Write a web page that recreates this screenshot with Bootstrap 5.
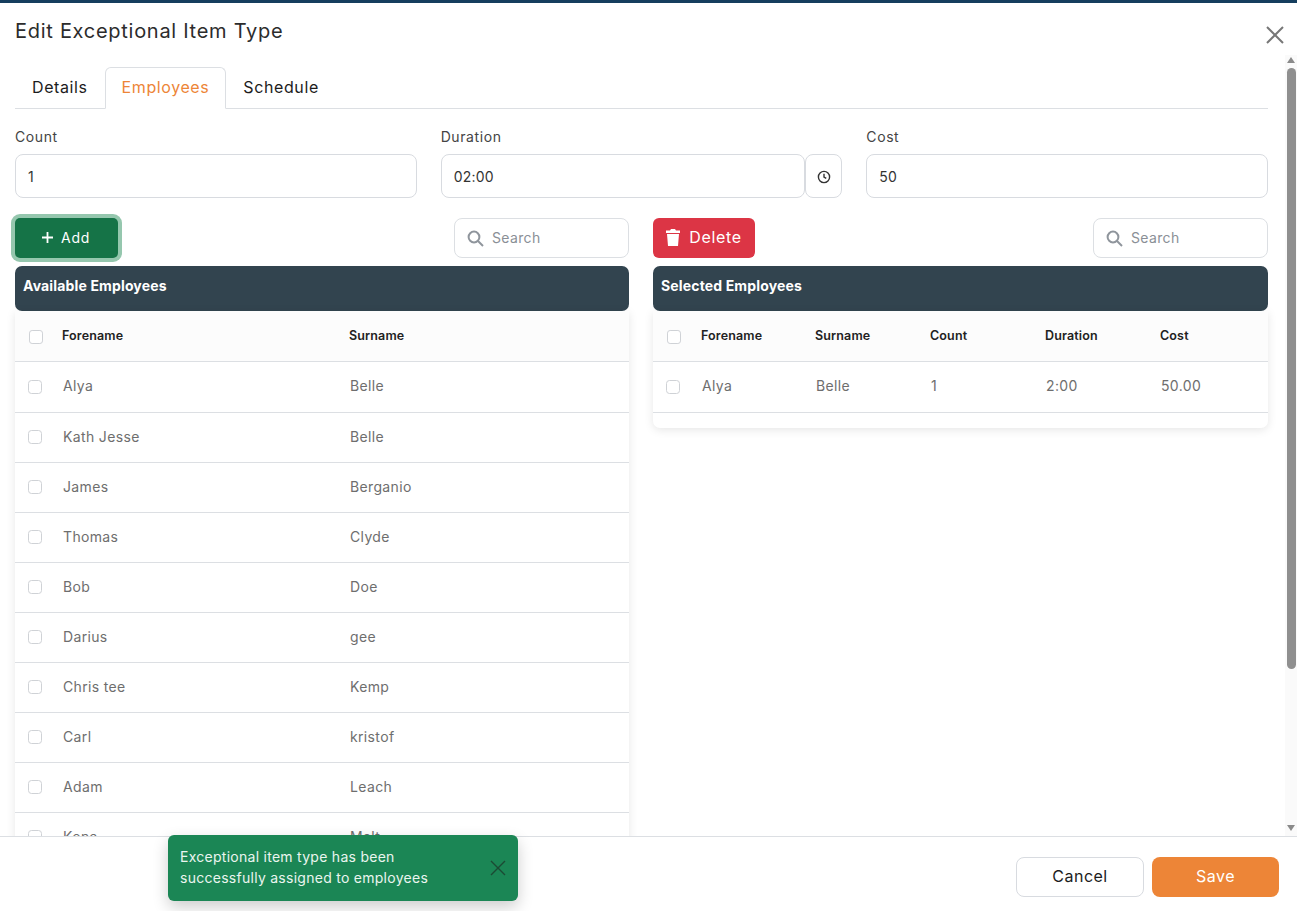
<!DOCTYPE html>
<html lang="en">
<head>
    <meta charset="UTF-8">
    <title>Edit Exceptional Item Type</title>
    <link href="https://cdn.jsdelivr.net/npm/bootstrap@5.3.0/dist/css/bootstrap.min.css" rel="stylesheet">
    <style>
        html, body { height: 100%; overflow: hidden; }
        body { font-family: Inter, "Open Sans", sans-serif; font-size: 14px; letter-spacing: .35px; color: #333; background: #fff; }

        .shell { height: 100vh; border-top: 3px solid #153e5e; position: relative; }
        .shell-head { height: 52px; padding: 0 15px; }
        .shell-title { font-size: 20px; font-weight: 400; line-height: 56px; margin: 0; color: #2c2c2c; letter-spacing: .72px; }
        .close-x { margin: 22px 12px 0 0; width: 20px; height: 20px; color: #777; }

        .scroll-area { min-height: 0; }
        .scroll-inner { padding: 12px 17px 0 15px; overflow: hidden; min-width: 0; }

        .rail { width: 12px; background: #fafafa; }
        .rail-up, .rail-down { width: 0; height: 0; border-left: 4px solid transparent; border-right: 4px solid transparent; margin: 2px auto; }
        .rail-up { border-bottom: 6px solid #8a8a8a; }
        .rail-down { border-top: 6px solid #8a8a8a; margin-top: auto; margin-bottom: 5px; }
        .rail-thumb { width: 9px; height: 601px; background: #8f8f8f; border-radius: 5px; margin: 3px 0 0 2px; }

        .tabs-row { border-bottom-color: #dcdfe3; margin-bottom: 19px; }
        .tabs-row .nav-link { font-size: 16px; padding: 0 16px; height: 42px; line-height: 39px; color: #1c1c1c; border-radius: 6px 6px 0 0; letter-spacing: .6px; }
        .tabs-row .nav-link.active { color: #ed8537; border-color: #dcdfe3 #dcdfe3 #fff; }

        .fld-row { margin-bottom: 20px; }
        .fld-label { font-size: 14px; margin-bottom: 9px; line-height: 17px; color: #444; display: block; letter-spacing: .6px; }
        .fld { height: 44px; border-color: #d8dbe0; border-radius: 8px; font-size: 14px; padding: 0 12px; color: #333; letter-spacing: .2px; }
        .clock-btn { width: 37px; height: 44px; padding: 0 0 2px; border: 1px solid #d8dbe0; border-radius: 8px; background: #fff; }

        .panes { display: grid; grid-template-columns: 614px 615px; gap: 24px; }
        .tool-row { height: 40px; margin-bottom: 8px; }
        .btn-add { width: 103px; height: 40px; background: #157347; color: #fff; border: 0; border-radius: 5px; box-shadow: 0 0 0 4px #95c7ae; font-size: 14px; padding: 0 2px 2px 0; letter-spacing: .7px; gap: 7px; }
        .btn-del { width: 102px; height: 40px; background: #dc3545; color: #fff; border: 0; border-radius: 6px; font-size: 16px; padding: 0 0 2px; letter-spacing: .7px; gap: 9px; }
        .btn-add svg, .btn-del svg { margin-bottom: -1px; }
        .search-box { width: 175px; height: 40px; border: 1px solid #dcdfe3; border-radius: 8px; padding: 0 0 2px 12px; color: #8a8f96; font-size: 14px; }
        .search-box svg { margin-bottom: -2px; }

        .panel-head { height: 45px; background: #32444f; color: #fff; border-radius: 7px; font-weight: 700; font-size: 14px; line-height: 40px; padding-left: 8px; letter-spacing: .15px; }
        .panel-body { background: #fff; box-shadow: 0 2px 10px rgba(0,0,0,.1); border-radius: 0 0 7px 7px; }

        .emp-table { table-layout: fixed; margin: 0; font-size: 14px; }
        .emp-table th { background: #fcfcfc; font-size: 12.5px; font-weight: 600; color: #222; height: 50px; padding: 2px 0 0; vertical-align: middle; border-bottom: 1px solid #dcdfe3; letter-spacing: .15px; }
        .emp-table td { height: 50px; padding: 0 0 2px 1px; vertical-align: middle; color: #6e6e6e; border-bottom: 1px solid #dcdfe3; }
        .emp-table tbody tr:first-child td { height: 51px; }
        .tick { width: 14px; height: 14px; margin: 0; border-color: #cfd2d6; border-radius: 3px; display: block; }
        th .tick { margin-left: 14px; }
        td .tick { margin-left: 12px; margin-bottom: -2px; }
        .sel-foot { height: 15px; }

        .shell-foot { height: 75px; border-top: 1px solid #dcdfe3; padding: 20px 18px 0 0; }
        .foot-btn { width: 128px; height: 40px; border-radius: 8px; font-size: 16px; padding: 0 0 2px; letter-spacing: .5px; }
        .btn-cancel { border: 1px solid #d8dbe0; background: #fff; color: #1c1c1c; }
        .btn-save { width: 127px; border: 0; background: #ed8537; color: #fff; }

        .done-toast { position: absolute; left: 168px; top: 832px; width: 350px; height: 66px; background: #1b8655; color: #eaf5ef; border-radius: 6px; box-shadow: 0 6px 16px rgba(0,0,0,.2); padding: 11px 12px; font-size: 14px; line-height: 21px; letter-spacing: .27px; }
        .toast-x { width: 16px; height: 16px; color: #1c4a34; flex: none; margin: 14px 0 0 8px; }
    </style>
</head>
<body>
    <div class="shell d-flex flex-column">
        <!-- Header -->
        <div class="shell-head flex-shrink-0">
            <h5 class="shell-title">Edit Exceptional Item Type</h5>
        </div>

        <!-- Scrolling part -->
        <div class="scroll-area d-flex flex-grow-1">
            <div class="scroll-inner flex-grow-1">
                <ul class="nav nav-tabs tabs-row">
                    <li class="nav-item"><a class="nav-link" href="#">Details</a></li>
                    <li class="nav-item"><a class="nav-link active" href="#">Employees</a></li>
                    <li class="nav-item"><a class="nav-link" href="#">Schedule</a></li>
                </ul>

                <div class="row gx-4 fld-row">
                    <div class="col-4">
                        <label class="fld-label">Count</label>
                        <input class="form-control fld" value="1">
                    </div>
                    <div class="col-4">
                        <label class="fld-label">Duration</label>
                        <div class="d-flex">
                            <input class="form-control fld" value="02:00">
                            <button class="clock-btn flex-shrink-0" type="button">
                                <svg width="14" height="14" viewBox="0 0 16 16" fill="none" stroke="#333" stroke-width="1.6"><circle cx="8" cy="8" r="6.4"/><path d="M8 4.2V8l2.6 1.6"/></svg>
                            </button>
                        </div>
                    </div>
                    <div class="col-4">
                        <label class="fld-label">Cost</label>
                        <input class="form-control fld" value="50">
                    </div>
                </div>

                <div class="panes">
                    <!-- Available -->
                    <div>
                        <div class="tool-row d-flex justify-content-between">
                            <button class="btn-add d-flex align-items-center justify-content-center" type="button">
                                <svg width="13" height="13" viewBox="0 0 13 13" stroke="#fff" stroke-width="1.8"><path d="M6.5 1v11M1 6.5h11"/></svg>Add
                            </button>
                            <div class="search-box d-flex align-items-center gap-2">
                                <svg width="17" height="17" viewBox="0 0 17 17" fill="none" stroke="#8f959c" stroke-width="2"><circle cx="7" cy="7" r="5.4"/><path d="M11 11l5 5"/></svg>Search
                            </div>
                        </div>
                        <div class="panel-head">Available Employees</div>
                        <div class="panel-body">
                            <table class="table emp-table">
                                <colgroup><col style="width:47px"><col style="width:287px"><col></colgroup>
                                <thead><tr><th><input class="form-check-input tick" type="checkbox"></th><th>Forename</th><th>Surname</th></tr></thead>
                                <tbody id="avail"></tbody>
                            </table>
                        </div>
                    </div>

                    <!-- Selected -->
                    <div>
                        <div class="tool-row d-flex justify-content-between">
                            <button class="btn-del d-flex align-items-center justify-content-center" type="button">
                                <svg width="14" height="17" viewBox="0 0 14 17" fill="#fff"><path d="M5 0h4l1 1.5h4V4H0V1.5h4zM1 5h12l-1 12H2z"/></svg>Delete
                            </button>
                            <div class="search-box d-flex align-items-center gap-2">
                                <svg width="17" height="17" viewBox="0 0 17 17" fill="none" stroke="#8f959c" stroke-width="2"><circle cx="7" cy="7" r="5.4"/><path d="M11 11l5 5"/></svg>Search
                            </div>
                        </div>
                        <div class="panel-head">Selected Employees</div>
                        <div class="panel-body">
                            <table class="table emp-table">
                                <colgroup><col style="width:48px"><col style="width:114px"><col style="width:115px"><col style="width:115px"><col style="width:115px"><col></colgroup>
                                <thead><tr><th><input class="form-check-input tick" type="checkbox"></th><th>Forename</th><th>Surname</th><th>Count</th><th>Duration</th><th>Cost</th></tr></thead>
                                <tbody>
                                    <tr><td><input class="form-check-input tick" type="checkbox"></td><td>Alya</td><td>Belle</td><td>1</td><td>2:00</td><td>50.00</td></tr>
                                </tbody>
                            </table>
                            <div class="sel-foot"></div>
                        </div>
                    </div>
                </div>
            </div>

            <!-- Scrollbar -->
            <div class="rail d-flex flex-column flex-shrink-0">
                <div class="rail-up"></div>
                <div class="rail-thumb"></div>
                <div class="rail-down"></div>
            </div>
        </div>

        <!-- Footer -->
        <div class="shell-foot d-flex justify-content-end gap-2 flex-shrink-0">
            <button class="btn foot-btn btn-cancel" type="button">Cancel</button>
            <button class="btn foot-btn btn-save" type="button">Save</button>
        </div>

        <!-- Close button and toast sit over the page -->
        <svg class="close-x position-absolute top-0 end-0" viewBox="0 0 20 20" fill="none" stroke="currentColor" stroke-width="2"><path d="M2 2l16 16M18 2L2 18"/></svg>
        <div class="done-toast d-flex justify-content-between">
            <div>Exceptional item type has been<br>successfully assigned to employees</div>
            <svg class="toast-x" viewBox="0 0 16 16" fill="none" stroke="currentColor" stroke-width="1.4"><path d="M1 1l14 14M15 1L1 15"/></svg>
        </div>
    </div>

    <script>
        const people = [
            ["Alya", "Belle"], ["Kath Jesse", "Belle"], ["James", "Berganio"], ["Thomas", "Clyde"], ["Bob", "Doe"],
            ["Darius", "gee"], ["Chris tee", "Kemp"], ["Carl", "kristof"], ["Adam", "Leach"], ["Kona", "Malt"]
        ];
        document.getElementById("avail").innerHTML = people.map(p =>
            `<tr><td><input class="form-check-input tick" type="checkbox"></td><td>${p[0]}</td><td>${p[1]}</td></tr>`
        ).join("");
    </script>
    <script src="https://cdn.jsdelivr.net/npm/bootstrap@5.3.0/dist/js/bootstrap.bundle.min.js"></script>
</body>
</html>
